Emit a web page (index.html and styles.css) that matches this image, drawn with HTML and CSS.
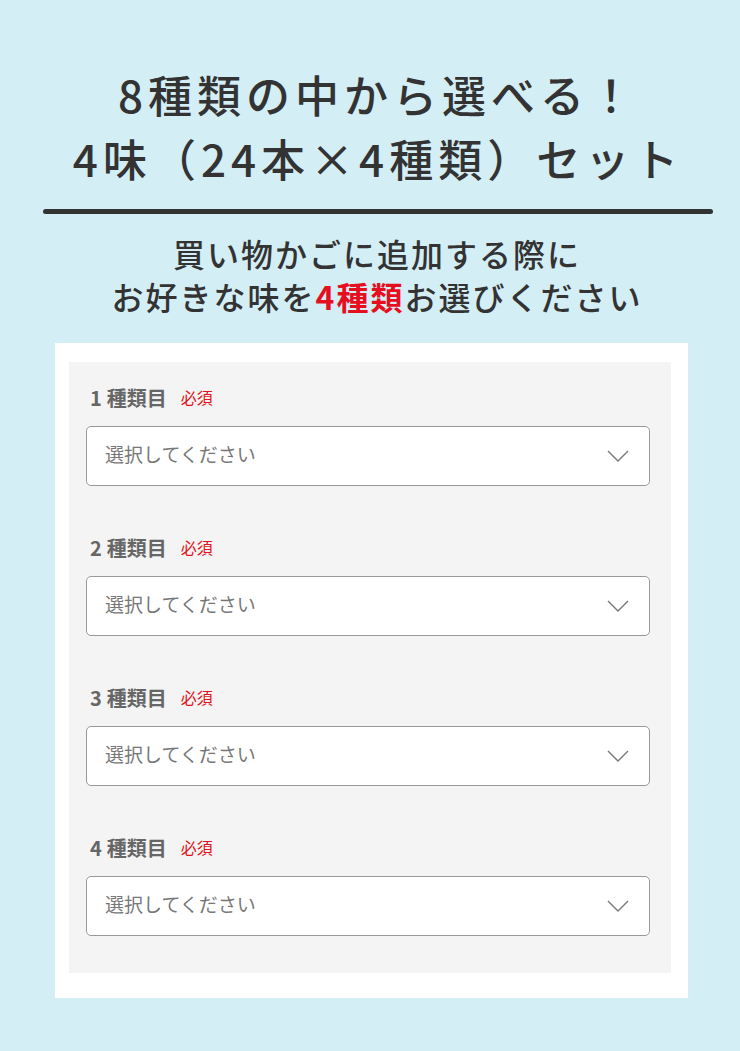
FILE: index.html
```html
<!DOCTYPE html>
<html lang="ja">

<head>
	<meta charset="UTF-8">
	<meta name="viewport" content="width=device-width, initial-scale=1.0">
	<title>8種類の中から選べる！4味セット</title>
	<link rel="stylesheet" href="styles.css">
</head>

<body>

	<div class="page">
		<h1 class="title">8種類の中から選べる！<br>4味（24本×4種類）セット</h1>
		<hr class="rule">

		<p class="lead">買い物かごに追加する際に<br>お好きな味を<span class="accent">4種類</span>お選びください</p>

		<div class="card">
			<div class="panel">
				<div class="field">
					<div class="label"><span class="num">1</span>種類目<span class="req">必須</span></div>
					<div class="select">
						<span>選択してください</span>
						<svg class="chev" width="22" height="12" viewBox="0 0 22 12"><path d="M1 1 L11 11 L21 1" fill="none" stroke="#777" stroke-width="1.4"/></svg>
					</div>
				</div>
				<div class="field">
					<div class="label"><span class="num">2</span>種類目<span class="req">必須</span></div>
					<div class="select">
						<span>選択してください</span>
						<svg class="chev" width="22" height="12" viewBox="0 0 22 12"><path d="M1 1 L11 11 L21 1" fill="none" stroke="#777" stroke-width="1.4"/></svg>
					</div>
				</div>
				<div class="field">
					<div class="label"><span class="num">3</span>種類目<span class="req">必須</span></div>
					<div class="select">
						<span>選択してください</span>
						<svg class="chev" width="22" height="12" viewBox="0 0 22 12"><path d="M1 1 L11 11 L21 1" fill="none" stroke="#777" stroke-width="1.4"/></svg>
					</div>
				</div>
				<div class="field">
					<div class="label"><span class="num">4</span>種類目<span class="req">必須</span></div>
					<div class="select">
						<span>選択してください</span>
						<svg class="chev" width="22" height="12" viewBox="0 0 22 12"><path d="M1 1 L11 11 L21 1" fill="none" stroke="#777" stroke-width="1.4"/></svg>
					</div>
				</div>
			</div>
		</div>
	</div>

</body>

</html>
```

FILE: styles.css
```css
body {
	margin: 0;
	padding: 0;
	background: #d3eef5;
	font-family: "Noto Sans CJK JP", "Noto Sans", sans-serif;
	color: #333;
}

.page {
	width: 740px;
	height: 1051px;
	padding-top: 62px;
	box-sizing: border-box;
}

.title {
	margin: 0;
	padding-left: 16px;
	text-align: center;
	font-size: 44px;
	font-weight: 500;
	line-height: 64px;
	letter-spacing: 5px;
	color: #333;
}

.rule {
	margin: 19px 27px 0 43px;
	height: 5px;
	border: none;
	border-radius: 3px;
	background: #333;
}

.lead {
	margin: 18px 0 0;
	padding-left: 14px;
	text-align: center;
	font-size: 32px;
	font-weight: 500;
	line-height: 43px;
	letter-spacing: 2px;
	color: #333;
}

.lead .accent {
	color: #e60f1f;
	font-weight: 700;
}

.card {
	margin: 25px 52px 0 55px;
	padding: 19px 17px 25px 14px;
	background: #fff;
}

.panel {
	background: #f4f4f4;
	padding: 22px 21px 37px 17px;
}

.field + .field {
	margin-top: 48px;
}

.label {
	font-size: 20px;
	font-weight: 700;
	color: #666;
	line-height: 26px;
	padding-left: 4px;
}

.num {
	margin-right: 5px;
}

.req {
	font-size: 16px;
	font-weight: 400;
	color: #e0141e;
	margin-left: 14px;
	vertical-align: 2px;
}

.select {
	margin-top: 15px;
	height: 60px;
	box-sizing: border-box;
	border: 1px solid #999;
	border-radius: 5px;
	background: #fff;
	display: flex;
	align-items: center;
	justify-content: space-between;
	padding: 0 20px 0 18px;
	font-size: 19px;
	color: #777;
}

.select span {
	margin-top: -6px;
}

.chev {
	display: block;
}
```
